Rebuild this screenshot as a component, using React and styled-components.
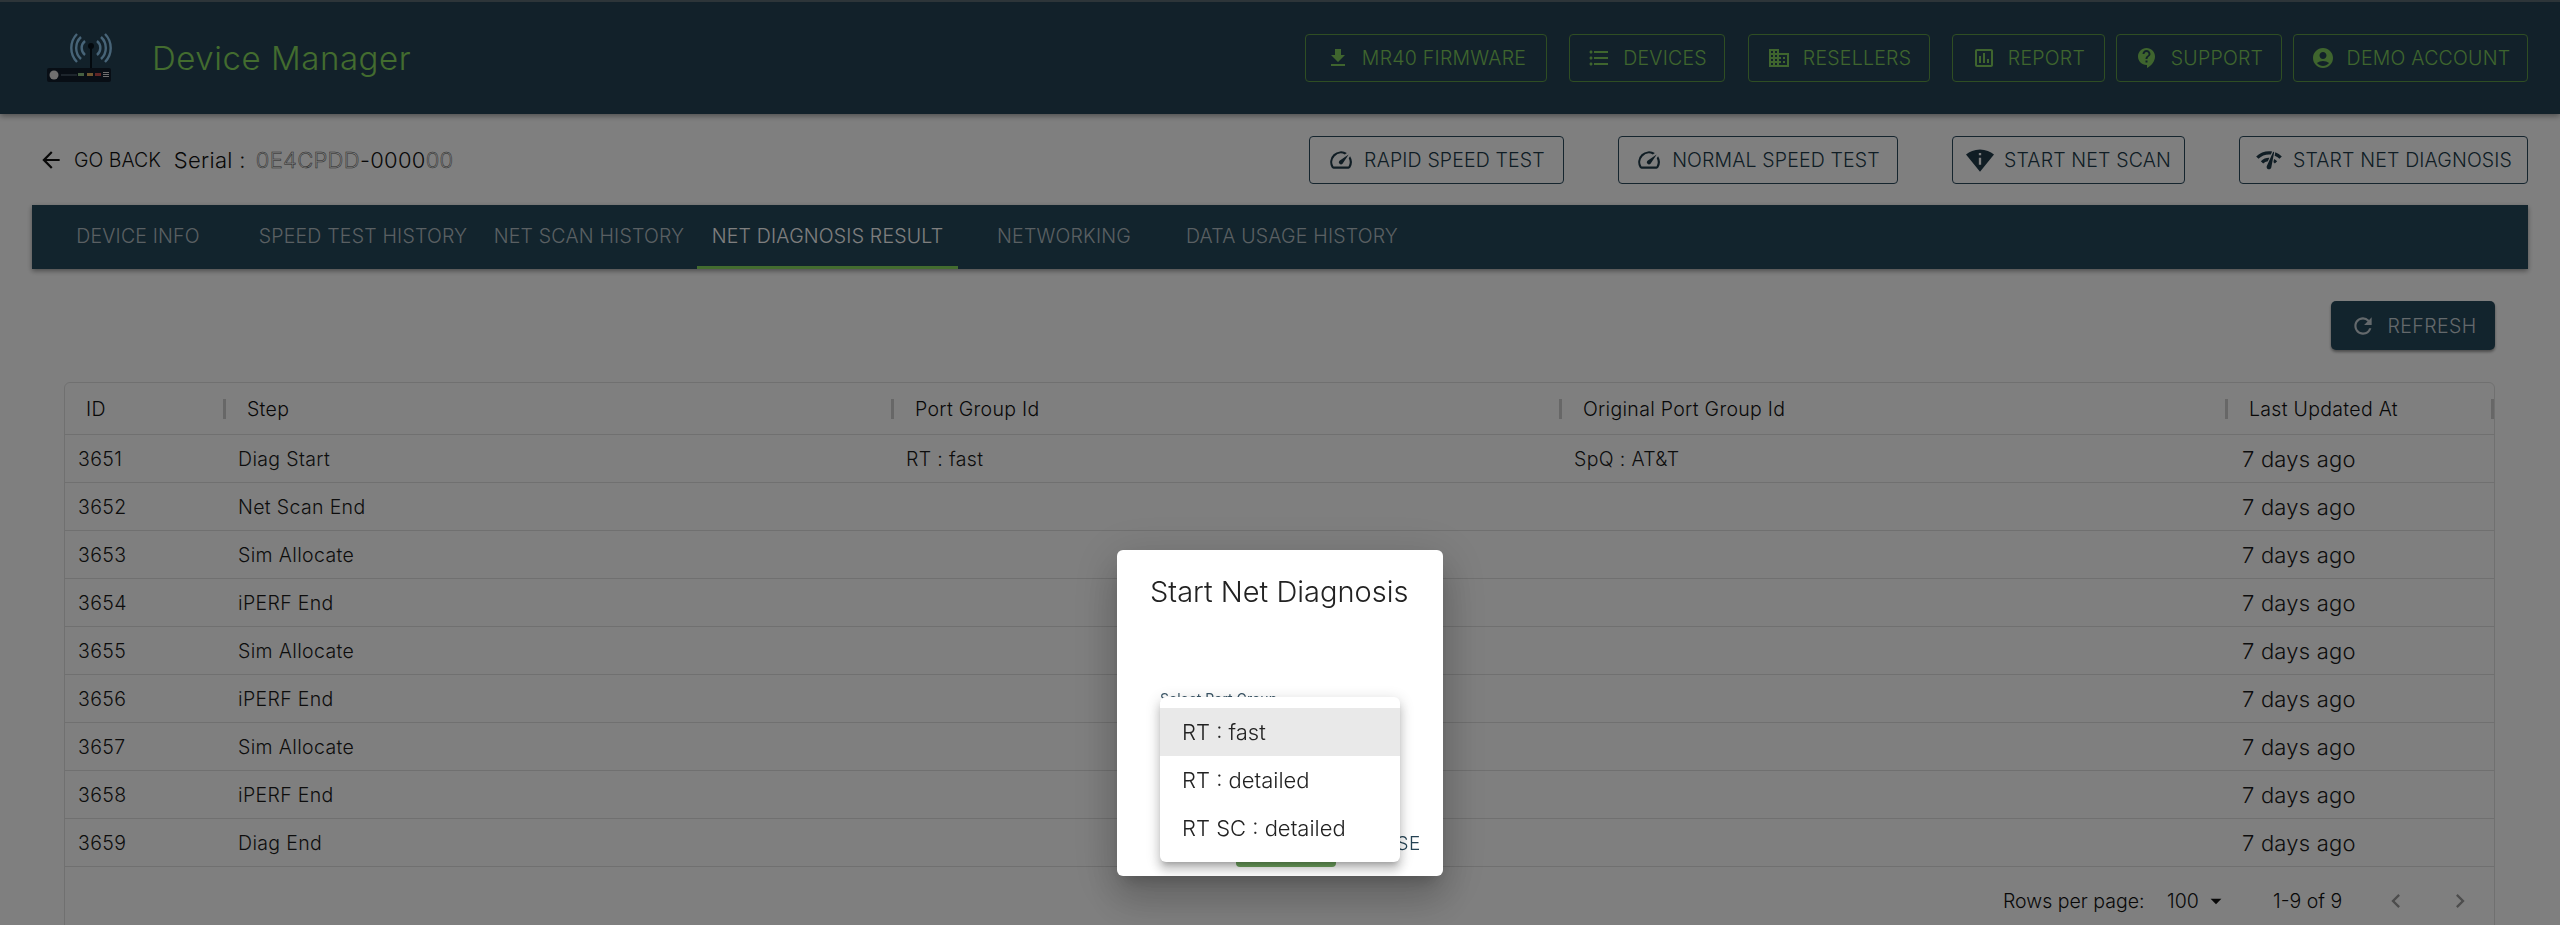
import React from "react";
import styled, { createGlobalStyle } from "styled-components";
import {
  MdFileDownload,
  MdFormatListBulleted,
  MdOutlineDomain,
  MdOutlineAssessment,
  MdContactSupport,
  MdAccountCircle,
  MdArrowBack,
  MdOutlineSpeed,
  MdPermScanWifi,
  MdNetworkCheck,
  MdRefresh,
  MdArrowDropDown,
  MdChevronLeft,
  MdChevronRight,
} from "react-icons/md";

const GlobalStyle = createGlobalStyle`
  html, body {
    margin: 0;
    height: 925px;
    overflow: hidden;
    background: #fff;
    font-family: Inter, "Open Sans", "Liberation Sans", sans-serif;
  }
  * { box-sizing: border-box; }
`;

const navItems = [
  { label: "MR40 FIRMWARE", icon: MdFileDownload, width: 242, gap: 22 },
  { label: "DEVICES", icon: MdFormatListBulleted, width: 156, gap: 23 },
  { label: "RESELLERS", icon: MdOutlineDomain, width: 182, gap: 22 },
  { label: "REPORT", icon: MdOutlineAssessment, width: 153, gap: 11 },
  { label: "SUPPORT", icon: MdContactSupport, width: 166, gap: 11 },
  { label: "DEMO ACCOUNT", icon: MdAccountCircle, width: 235, gap: 0 },
];

const actions = [
  { label: "RAPID SPEED TEST", icon: MdOutlineSpeed, width: 255, size: 26 },
  { label: "NORMAL SPEED TEST", icon: MdOutlineSpeed, width: 280, size: 26 },
  { label: "START NET SCAN", icon: MdPermScanWifi, width: 233, size: 28 },
  { label: "START NET DIAGNOSIS", icon: MdNetworkCheck, width: 289, size: 28 },
];

const tabs = [
  { label: "DEVICE INFO", width: 188 },
  { label: "SPEED TEST HISTORY", width: 262 },
  { label: "NET SCAN HISTORY", width: 190 },
  { label: "NET DIAGNOSIS RESULT", width: 261, gap: 13, active: true },
  { label: "NETWORKING", width: 212 },
  { label: "DATA USAGE HISTORY", width: 244 },
];

const columns = ["ID", "Step", "Port Group Id", "Original Port Group Id", "Last Updated At"];

const rows = [
  ["3651", "Diag Start", "RT : fast", "SpQ : AT&T"],
  ["3652", "Net Scan End", "", ""],
  ["3653", "Sim Allocate", "", ""],
  ["3654", "iPERF End", "", ""],
  ["3655", "Sim Allocate", "", ""],
  ["3656", "iPERF End", "", ""],
  ["3657", "Sim Allocate", "", ""],
  ["3658", "iPERF End", "", ""],
  ["3659", "Diag End", "", ""],
];

const options = ["RT : fast", "RT : detailed", "RT SC : detailed"];

const Logo = () => (
  <svg width="68" height="54" viewBox="0 0 68 54">
    <g fill="none" stroke="#8fc8f0" strokeWidth="2.4">
      <path d="M40 10a9 9 0 0 0 0 14" />
      <path d="M36 6a15 15 0 0 0 0 22" />
      <path d="M32 3a20 20 0 0 0 0 28" />
      <path d="M52 10a9 9 0 0 1 0 14" />
      <path d="M56 6a15 15 0 0 1 0 22" />
      <path d="M60 3a20 20 0 0 1 0 28" />
    </g>
    <circle cx="46" cy="15" r="3" fill="#06121c" />
    <rect x="45" y="15" width="2" height="24" fill="#06121c" />
    <rect x="2" y="37" width="64" height="14" rx="2" fill="#101c2a" />
    <circle cx="9" cy="44" r="4.5" fill="#e0e0e0" />
    <rect x="16" y="43" width="16" height="2" fill="#3a4a58" />
    <rect x="33" y="42" width="6" height="3" fill="#8fc082" />
    <rect x="42" y="42" width="6" height="3" fill="#e0b060" />
    <rect x="50" y="42" width="6" height="3" fill="#c04a4a" />
    <rect x="58" y="41" width="6" height="1" fill="#ddd" />
    <rect x="58" y="43" width="6" height="1" fill="#ddd" />
    <rect x="58" y="45" width="6" height="1" fill="#ddd" />
  </svg>
);

export default function App() {
  return (
    <Page>
      <GlobalStyle />
      <Header>
        <Brand>
          <Logo />
          <BrandTitle>Device Manager</BrandTitle>
        </Brand>
        <Nav>
          {navItems.map(({ label, icon: Icon, width, gap }) => (
            <NavButton key={label} $width={width} $gap={gap}>
              <Icon size={24} />
              {label}
            </NavButton>
          ))}
        </Nav>
      </Header>

      <ActionBar>
        <BackGroup>
          <BackLink>
            <MdArrowBack size={26} />
            GO BACK
          </BackLink>
          <Serial>
            Serial :<SerialMasked>0E4CPDD</SerialMasked>-0000
            <SerialMasked>00</SerialMasked>
          </Serial>
        </BackGroup>
        <Actions>
          {actions.map(({ label, icon: Icon, width, size }) => (
            <OutlineButton key={label} $width={width}>
              <Icon size={size} />
              {label}
            </OutlineButton>
          ))}
        </Actions>
      </ActionBar>

      <TabBar>
        {tabs.map((tab) => (
          <Tab key={tab.label} $width={tab.width} $gap={tab.gap} $active={tab.active}>
            {tab.label}
          </Tab>
        ))}
      </TabBar>

      <RefreshRow>
        <RefreshButton>
          <MdRefresh size={26} />
          REFRESH
        </RefreshButton>
      </RefreshRow>

      <Table>
        <HeadRow>
          {columns.map((col) => (
            <HeadCell key={col}>{col}</HeadCell>
          ))}
        </HeadRow>
        {rows.map((row) => (
          <Row key={row[0]}>
            {row.map((value, i) => (
              <Cell key={i}>{value}</Cell>
            ))}
            <TimeCell>7 days ago</TimeCell>
          </Row>
        ))}
        <Pagination>
          <PageText>Rows per page:</PageText>
          <PageSelect>
            100
            <MdArrowDropDown size={26} />
          </PageSelect>
          <PageRange>1-9 of 9</PageRange>
          <PageArrow>
            <MdChevronLeft size={28} />
          </PageArrow>
          <PageArrow>
            <MdChevronRight size={28} />
          </PageArrow>
        </Pagination>
      </Table>

      <Overlay>
        <Modal>
          <ModalTitle>Start Net Diagnosis</ModalTitle>
          <FieldLabel>Select Port Group</FieldLabel>
          <ModalActions>
            <SubmitButton />
            <CloseButton>CLOSE</CloseButton>
          </ModalActions>
          <Menu>
            {options.map((option, i) => (
              <MenuItem key={option} $selected={i === 0}>
                {option}
              </MenuItem>
            ))}
          </Menu>
        </Modal>
      </Overlay>
    </Page>
  );
}

const Page = styled.div`
  height: 925px;
  overflow: hidden;
  background: #fff;
  color: #222;
`;

const Header = styled.header`
  height: 114px;
  padding: 0 32px 0 45px;
  display: flex;
  align-items: center;
  justify-content: space-between;
  background: #254354;
  border-top: 2px solid #5a6a72;
  box-shadow: 0 2px 6px rgba(0, 0, 0, 0.4);
`;

const Brand = styled.div`
  display: flex;
  align-items: center;
  gap: 39px;
`;

const BrandTitle = styled.div`
  font-size: 33px;
  font-weight: 300;
  letter-spacing: 0.55px;
  color: #86d85f;
`;

const Nav = styled.nav`
  display: flex;
`;

const NavButton = styled.button`
  width: ${(p) => p.$width}px;
  height: 48px;
  margin-right: ${(p) => p.$gap}px;
  padding: 0;
  display: flex;
  align-items: center;
  justify-content: center;
  gap: 12px;
  background: transparent;
  border: 1px solid #5f9c46;
  border-radius: 4px;
  color: #7ecb5c;
  font: 300 19.5px Inter, sans-serif;
  letter-spacing: 0.25px;
  white-space: nowrap;
`;

const ActionBar = styled.div`
  height: 91px;
  padding: 0 32px 0 38px;
  display: flex;
  align-items: center;
  justify-content: space-between;
`;

const BackGroup = styled.div`
  display: flex;
  align-items: center;
  gap: 13px;
`;

const BackLink = styled.div`
  display: flex;
  align-items: center;
  gap: 10px;
  font-size: 19.5px;
  font-weight: 300;
  color: #111;
`;

const Serial = styled.div`
  font-size: 22px;
  font-weight: 300;
  letter-spacing: 0.3px;
  color: #111;
`;

const SerialMasked = styled.span`
  margin-left: 10px;
  color: transparent;
  -webkit-text-stroke: 0.5px #555;
  & + & {
    margin-left: 0;
  }
`;

const Actions = styled.div`
  display: flex;
  gap: 54px;
`;

const OutlineButton = styled.button`
  width: ${(p) => p.$width}px;
  height: 48px;
  padding: 0;
  display: flex;
  align-items: center;
  justify-content: center;
  gap: 10px;
  background: transparent;
  border: 1px solid #2a4a5c;
  border-radius: 4px;
  color: #203a49;
  font: 300 19.5px Inter, sans-serif;
  letter-spacing: 0.15px;
  white-space: nowrap;
`;

const TabBar = styled.div`
  height: 64px;
  margin: 0 32px;
  padding-left: 12px;
  display: flex;
  background: #25485a;
  box-shadow: 0 2px 5px rgba(0, 0, 0, 0.4);
`;

const Tab = styled.div`
  width: ${(p) => p.$width}px;
  margin-left: ${(p) => p.$gap || 0}px;
  display: flex;
  align-items: center;
  justify-content: center;
  font-size: 19.5px;
  font-weight: 300;
  letter-spacing: 0.2px;
  white-space: nowrap;
  color: ${(p) => (p.$active ? "#fff" : "#b5c0c6")};
  border-bottom: 3px solid ${(p) => (p.$active ? "#86d85f" : "transparent")};
`;

const RefreshRow = styled.div`
  height: 113px;
  padding: 32px 65px 0 0;
  display: flex;
  justify-content: flex-end;
`;

const RefreshButton = styled.button`
  width: 164px;
  height: 49px;
  padding: 0;
  display: flex;
  align-items: center;
  justify-content: center;
  gap: 12px;
  background: #25485a;
  border: 0;
  border-radius: 5px;
  color: #c8d2d8;
  font: 300 19.5px Inter, sans-serif;
  letter-spacing: 0.4px;
  box-shadow: 0 2px 3px rgba(0, 0, 0, 0.4);
`;

const Table = styled.div`
  width: 2431px;
  margin-left: 64px;
  border: 1px solid #e0e0e0;
  border-radius: 6px;
`;

const HeadRow = styled.div`
  height: 52px;
  display: grid;
  grid-template-columns: 161px 668px 668px 666px 1fr;
  align-items: center;
  border-bottom: 1px solid #e0e0e0;
`;

const HeadCell = styled.div`
  height: 20px;
  padding-left: 21px;
  display: flex;
  align-items: center;
  font-size: 19.5px;
  font-weight: 300;
  letter-spacing: 0.3px;
  color: #111;
  border-right: 3px solid #cfcfcf;
`;

const Row = styled.div`
  height: 48px;
  display: grid;
  grid-template-columns: 160px 668px 668px 666px 1fr;
  align-items: center;
  border-bottom: 1px solid #e0e0e0;
`;

const Cell = styled.div`
  padding-left: 13px;
  font-size: 19.5px;
  font-weight: 300;
  letter-spacing: 0.35px;
  color: #1a1a1a;
`;

const TimeCell = styled(Cell)`
  padding-left: 15px;
  font-size: 22px;
  letter-spacing: 0.2px;
`;

const Pagination = styled.div`
  height: 68px;
  padding-left: 1938px;
  display: flex;
  align-items: center;
`;

const PageText = styled.span`
  flex: 0 0 164px;
  font-size: 19.5px;
  font-weight: 300;
  white-space: nowrap;
  color: #111;
`;

const PageSelect = styled.span`
  flex: 0 0 106px;
  display: flex;
  align-items: center;
  gap: 4px;
  font-size: 19.5px;
  font-weight: 300;
  color: #111;
`;

const PageRange = styled(PageText)`
  flex-basis: 109px;
`;

const PageArrow = styled.span`
  flex: 0 0 64px;
  display: flex;
  color: #9a9a9a;
`;

const Overlay = styled.div`
  position: fixed;
  inset: 0;
  padding-top: 550px;
  display: flex;
  justify-content: center;
  align-items: flex-start;
  background: rgba(0, 0, 0, 0.5);
`;

const Modal = styled.div`
  position: relative;
  width: 326px;
  height: 326px;
  padding: 22px 22px 22px 33px;
  background: #fff;
  border-radius: 6px;
  overflow: hidden;
  box-shadow: 0 11px 15px -7px rgba(0, 0, 0, 0.2), 0 24px 38px 3px rgba(0, 0, 0, 0.14),
    0 9px 46px 8px rgba(0, 0, 0, 0.12);
`;

const ModalTitle = styled.h2`
  margin: 0;
  font-size: 29px;
  line-height: 40px;
  font-weight: 300;
  white-space: nowrap;
  color: #222;
`;

const FieldLabel = styled.div`
  margin: 78px 0 0 10px;
  font-size: 14px;
  color: #3a5566;
`;

const ModalActions = styled.div`
  margin-top: 112px;
  display: flex;
  align-items: center;
  justify-content: flex-end;
  gap: 20px;
`;

const SubmitButton = styled.div`
  width: 100px;
  height: 48px;
  background: #72a862;
  border-radius: 4px;
`;

const CloseButton = styled.div`
  font-size: 19px;
  font-weight: 300;
  letter-spacing: 0.6px;
  color: #254354;
`;

const Menu = styled.div`
  position: absolute;
  top: 147px;
  left: 43px;
  width: 240px;
  height: 165px;
  padding: 11px 0;
  background: #fff;
  border-radius: 6px;
  box-shadow: 0 5px 5px -3px rgba(0, 0, 0, 0.2), 0 8px 10px 1px rgba(0, 0, 0, 0.14),
    0 3px 14px 2px rgba(0, 0, 0, 0.12);
`;

const MenuItem = styled.div`
  height: 48px;
  padding-left: 22px;
  display: flex;
  align-items: center;
  font-size: 22px;
  font-weight: 300;
  color: #222;
  white-space: nowrap;
  background: ${(p) => (p.$selected ? "#e9e9e9" : "transparent")};
`;
